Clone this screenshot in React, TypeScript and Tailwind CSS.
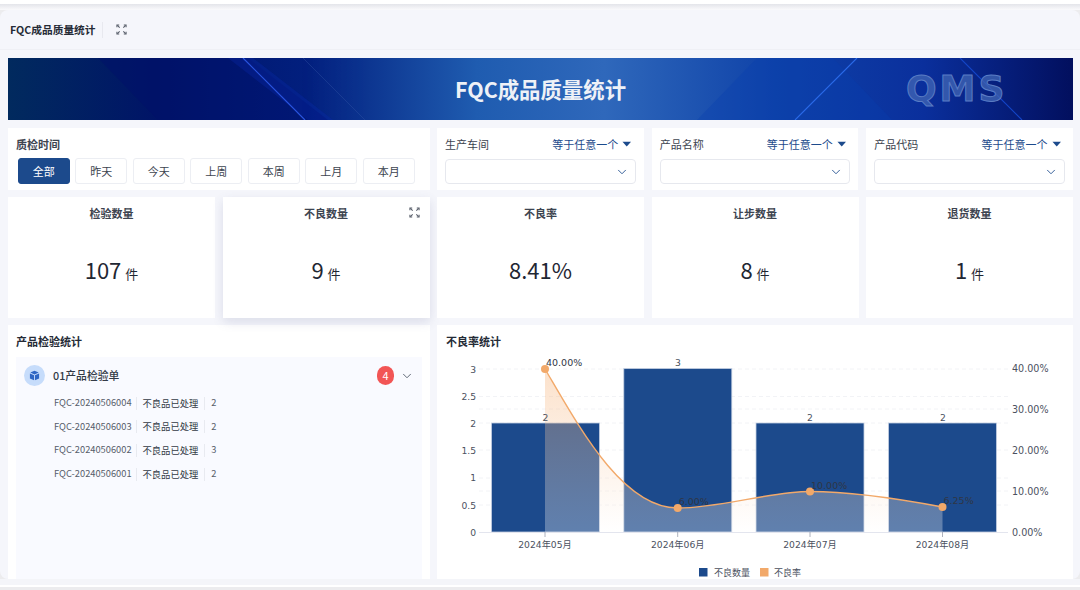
import { ChevronDown } from "lucide-react";

const CJK = "font-['Noto_Sans_CJK_SC','Noto_Sans',sans-serif]";

const RANGES = ["全部", "昨天", "今天", "上周", "本周", "上月", "本月"];
const KPIS = [
  { label: "检验数量", value: "107", unit: "件" },
  { label: "不良数量", value: "9", unit: "件", expand: true, raised: true },
  { label: "不良率", value: "8.41%" },
  { label: "让步数量", value: "8", unit: "件" },
  { label: "退货数量", value: "1", unit: "件" },
];
const ORDERS = [
  ["FQC-20240506004", "2"],
  ["FQC-20240506003", "2"],
  ["FQC-20240506002", "3"],
  ["FQC-20240506001", "2"],
];

function ExpandIcon() {
  return (
    <svg viewBox="0 0 12 12" className="h-[11px] w-[11px]" fill="none" stroke="#565c68" strokeWidth="1.15">
      <path d="M1 3.5V1h2.5M8.5 1H11v2.5M11 8.5V11H8.5M3.5 11H1V8.5" />
      <path d="M1.5 1.5l2.5 2.5M10.5 1.5L8 4M10.5 10.5L8 8M1.5 10.5L4 8" />
    </svg>
  );
}

function Caret() {
  return (
    <svg viewBox="0 0 10 6" className="h-[6px] w-[9.5px]">
      <path d="M0.5 0.5h9L5 5.5z" fill="#1c4a8c" />
    </svg>
  );
}

function SelectFilter({ label }: { label: string }) {
  return (
    <div className="flex flex-1 flex-col bg-white px-2 pt-[7px]">
      <div className="flex items-center justify-between pr-[4px] text-[11px] leading-[18px]">
        <span className="text-[#3d4450]">{label}</span>
        <span className="flex items-center gap-[4px] text-[#1c4a8c]">
          等于任意一个
          <Caret />
        </span>
      </div>
      <div className="mt-[6px] flex h-[25px] items-center justify-end rounded-[4px] border border-[#e6e8ee] pr-[6px]">
        <ChevronDown className="h-[14px] w-[14px] text-[#1c4a8c]" strokeWidth={1.5} />
      </div>
    </div>
  );
}

function Kpi({ label, value, unit, expand, raised }: { label: string; value: string; unit?: string; expand?: boolean; raised?: boolean }) {
  return (
    <div className={`relative flex flex-1 flex-col items-center bg-white ${raised ? "shadow-[0_4px_10px_rgba(90,95,140,0.16)]" : ""}`}>
      <div className="mt-[8px] text-[11px] font-bold leading-[16px] text-[#3d4450]">{label}</div>
      {expand && (
        <div className="absolute right-[10px] top-[10px]">
          <ExpandIcon />
        </div>
      )}
      <div className="mt-[33px] flex items-baseline gap-[4px] text-[#1f2733]">
        <span className="text-[22px] leading-[30px]">{value}</span>
        {unit && <span className="text-[13px]">{unit}</span>}
      </div>
    </div>
  );
}

function BannerArt() {
  return (
    <svg viewBox="0 0 1065 62" preserveAspectRatio="none" className="absolute inset-0 h-full w-full">
      <path d="M90 0L150 62H320L240 0z" fill="#00106a" opacity="0.45" />
      <path d="M220 0L300 62H325L245 0z" fill="#0a2bb0" opacity="0.3" />
      <path d="M235 0L297 62" stroke="#2a55e0" strokeWidth="1.2" />
      <path d="M295 0L357 62" stroke="#3a5aa8" strokeWidth="0.7" opacity="0.5" />
      <path d="M749 0H825L884 62H689z" fill="#0a3fae" opacity="0.35" />
      <path d="M849 0L787 62" stroke="#2a6ae8" strokeWidth="1.1" />
      <path d="M952 0L1014 62" stroke="#1446c8" strokeWidth="1.1" />
    </svg>
  );
}

function RateChart() {
  const barY = (v: number) => 532 - v * 54.5;
  const bars = [
    { x: 491.5, v: 2 },
    { x: 623.8, v: 3 },
    { x: 756, v: 2 },
    { x: 888.5, v: 2 },
  ];
  const line = "M545 369C578 425 622 508 677.7 508C720 508 770 491.5 810 491.5C850 491.5 900 499 942.5 507";
  const points = [
    [545, 369, "40.00%"],
    [677.7, 508, "6.00%"],
    [810, 491.5, "10.00%"],
    [942.5, 507, "6.25%"],
  ] as const;
  return (
    <svg viewBox="437 350 636 229" className="h-[229px] w-[636px]" style={{ fontFamily: "'DejaVu Sans','Noto Sans CJK SC',sans-serif" }}>
      <defs>
        <linearGradient id="rateFill" x1="0" y1="0" x2="0" y2="1">
          <stop offset="0%" stopColor="#f4a460" stopOpacity="0.33" />
          <stop offset="100%" stopColor="#ffffff" stopOpacity="0.3" />
        </linearGradient>
      </defs>
      {[369, 396.5, 409, 423, 450, 478, 491, 505].map((y) => (
        <line key={y} x1="479" x2="1008" y1={y} y2={y} stroke="#eff0f4" strokeDasharray="4 3" strokeWidth="0.8" />
      ))}
      {bars.map((b) => (
        <rect key={b.x} x={b.x} y={barY(b.v)} width="108" height={532 - barY(b.v)} fill="#1c4a8c" stroke="#c4cfe2" strokeWidth="0.8" />
      ))}
      <path d={`${line}V532H545z`} fill="url(#rateFill)" />
      <line x1="479" x2="1008" y1="532.5" y2="532.5" stroke="#e3e5ee" strokeWidth="1.2" />
      {[545, 677.7, 810, 942.5].map((x) => (
        <line key={x} x1={x} x2={x} y1="532" y2="537" stroke="#9aa0ad" strokeWidth="0.8" />
      ))}
      <path d={line} fill="none" stroke="#f2a96a" strokeWidth="1.4" />
      {points.map(([x, y]) => (
        <circle key={x} cx={x} cy={y} r="4" fill="#f2a96a" />
      ))}
      <g fontSize="9.2" fill="#4b5160">
        {["3", "2.5", "2", "1.5", "1", "0.5", "0"].map((t, i) => (
          <text key={t} x="476" y={372.5 + i * 27.2} textAnchor="end">{t}</text>
        ))}
        {["40.00%", "30.00%", "20.00%", "10.00%", "0.00%"].map((t, i) => (
          <text key={t} x="1012" y={372 + i * 41} fontSize="9.6">{t}</text>
        ))}
        {["2024年05月", "2024年06月", "2024年07月", "2024年08月"].map((t, i) => (
          <text key={t} x={[545, 677.7, 810, 942.5][i]} y="548" textAnchor="middle">{t}</text>
        ))}
        <text x="545.5" y="421" textAnchor="middle">2</text>
        <text x="678" y="366" textAnchor="middle">3</text>
        <text x="810" y="421" textAnchor="middle">2</text>
        <text x="943" y="421" textAnchor="middle">2</text>
      </g>
      <g fontSize="9.5" fill="#2f3645">
        {points.map(([x, y, t]) => (
          <text key={t} x={x + 1} y={y - 3}>{t}</text>
        ))}
      </g>
      <rect x="699" y="568" width="8.5" height="8.5" fill="#1c4a8c" />
      <rect x="760" y="568" width="8.5" height="8.5" fill="#f2a96a" />
      <g fontSize="9" fill="#4b5160">
        <text x="714" y="576">不良数量</text>
        <text x="774" y="576">不良率</text>
      </g>
    </svg>
  );
}

export default function App() {
  return (
    <div className={`flex h-[590px] w-[1080px] flex-col overflow-hidden bg-[#ececee] ${CJK}`}>
      <div className="h-[4px] bg-white" />
      <div className="h-[6px] bg-gradient-to-b from-[#e4e5ea] to-[#fafafc]" />
      <div className="flex h-[569px] shrink-0 flex-col overflow-hidden rounded-[8px] bg-[#f5f6fb]">
        <div className="flex h-[40px] shrink-0 items-center border-b border-[#eff0f5] pl-[10px]">
          <span className="border-r border-[#e8e9ef] pr-[6px] text-[10.7px] font-bold leading-[16px] text-[#252b36]">FQC成品质量统计</span>
          <span className="ml-[13px]">
            <ExpandIcon />
          </span>
        </div>
        <div className="flex flex-col gap-[7px] pl-[8px] pr-[7px] pt-[8px]">
          <div className="relative flex h-[62px] items-center justify-center overflow-hidden bg-[linear-gradient(90deg,#012a5e_0%,#001467_14%,#021f7e_28%,#1f5cb0_44%,#2f68bb_56%,#0f42a8_72%,#0a2f9c_86%,#020f5e_100%)]">
            <BannerArt />
            <span className="relative text-[21.4px] font-bold text-[#eef1f7]">FQC成品质量统计</span>
            <span className="absolute left-[898px] top-[12px] font-['DejaVu_Sans',sans-serif] text-[36px] font-black leading-[38px] tracking-[3px] text-[#3f64b4]/80 [-webkit-text-stroke:1px_#5a7cc4]">QMS</span>
          </div>

          <div className="mt-[1px] flex h-[62px] gap-[7px]">
            <div className="flex w-[422px] shrink-0 flex-col bg-white pl-[8px] pt-[7px]">
              <div className="text-[11px] font-bold leading-[18px] text-[#3d4450]">质检时间</div>
              <div className="ml-[2px] mt-[5px] flex gap-[5.9px]">
                {RANGES.map((r, i) => (
                  <div
                    key={r}
                    className={`flex h-[26px] w-[51.6px] items-center justify-center rounded-[3px] border text-[11px] ${i === 0 ? "border-[#1c4a8c] bg-[#1c4a8c] text-white" : "border-[#eceef3] bg-white text-[#3d4450]"}`}
                  >
                    {r}
                  </div>
                ))}
              </div>
            </div>
            <div className="flex flex-1 gap-[8px]">
              <SelectFilter label="生产车间" />
              <SelectFilter label="产品名称" />
              <SelectFilter label="产品代码" />
            </div>
          </div>

          <div className="flex h-[121px] gap-[7.5px]">
            {KPIS.map((k) => (
              <Kpi key={k.label} {...k} />
            ))}
          </div>

          <div className="flex h-[254px] gap-[7px]">
            <div className="flex w-[422px] shrink-0 flex-col bg-white px-[8px] pt-[8px]">
              <div className="text-[11px] font-bold leading-[16px] text-[#252b36]">产品检验统计</div>
              <div className="mt-[8px] flex-1 bg-[#f9faff]">
                <div className="flex h-[37px] items-center pl-[7.5px] pr-[8px]">
                  <div className="flex h-[21.5px] w-[21.5px] items-center justify-center rounded-full bg-[#c6dcfb]">
                    <svg viewBox="0 0 12 12" className="h-[11px] w-[11px]">
                      <path d="M6 .8l4.6 2L6 4.9 1.4 2.8z" fill="#2f66c4" />
                      <path d="M1 3.8l4.5 2v5.4L1 9.2zM11 3.8l-4.5 2v5.4L11 9.2z" fill="#2f66c4" />
                    </svg>
                  </div>
                  <span className="ml-[8px] text-[10.8px] font-medium text-[#333a46]">01产品检验单</span>
                  <div className="ml-auto flex h-[18.5px] w-[17px] items-center justify-center rounded-full bg-[#f25555] text-[11px] text-white">4</div>
                  <ChevronDown className="ml-[6px] h-[14px] w-[14px] text-[#4b5563]" strokeWidth={1.5} />
                </div>
                <div className="-mt-[2.8px] flex flex-col">
                  {ORDERS.map(([code, qty]) => (
                    <div key={code} className="flex h-[23.7px] items-center pl-[38px] text-[9.3px]">
                      <span className="w-[81.5px] whitespace-nowrap text-[#565d6a]">{code}</span>
                      <span className="border-x border-[#e8eaf0] px-[6px] leading-[13px] text-[#333a46]">不良品已处理</span>
                      <span className="pl-[6px] text-[#565d6a]">{qty}</span>
                    </div>
                  ))}
                </div>
              </div>
            </div>
            <div className="flex flex-1 flex-col bg-white">
              <div className="pl-[9px] pt-[8px] text-[11px] font-bold leading-[16px] text-[#252b36]">不良率统计</div>
              <div className="mt-[1px]">
                <RateChart />
              </div>
            </div>
          </div>
        </div>
      </div>
      <div className="h-[6px] shrink-0 bg-[#f4f5f9]" />
      <div className="h-[2px] shrink-0 bg-white" />
    </div>
  );
}
